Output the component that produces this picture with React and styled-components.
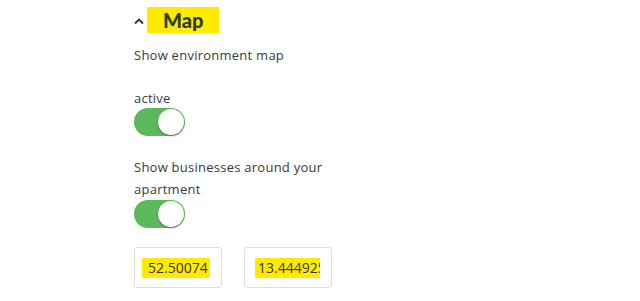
import React from "react";
import styled, { createGlobalStyle } from "styled-components";

const Global = createGlobalStyle`
  html, body { margin: 0; padding: 0; background: #fff; }
  body { font-family: "Open Sans", "Lato", sans-serif; color: #3a3a3a; }
`;

const Panel = styled.div`
  width: 220px;
  padding: 7px 0 0 134px;
  display: flex;
  flex-direction: column;
`;

const Header = styled.div`
  display: flex;
  align-items: center;
  height: 26px;
`;

const Chevron = styled.svg`
  width: 10px;
  height: 8px;
  margin-right: 3px;
  margin-top: 2px;
`;

const Title = styled.h2`
  margin: 0;
  font-family: "Lato", sans-serif;
  font-size: 20px;
  font-weight: 900;
  color: #2f3a1a;
  background: #ffea00;
  height: 26px;
  line-height: 26px;
  padding: 0 17px 0 16px;
  box-sizing: border-box;
  width: 72px;
`;

const Label = styled.div`
  font-size: 13px;
  line-height: 22px;
  letter-spacing: 0.25px;
  margin-top: ${(p) => p.$mt || 0}px;
`;

const Switch = styled.div`
  width: 51px;
  height: 28px;
  border-radius: 14px;
  background: #5cb85c;
  position: relative;
  margin-top: ${(p) => p.$mt || 0}px;
`;

const Knob = styled.div`
  position: absolute;
  right: 1px;
  top: 1px;
  width: 26px;
  height: 26px;
  border-radius: 50%;
  background: #fff;
  box-shadow: 0 1px 2px rgba(0, 0, 0, 0.35);
`;

const Inputs = styled.div`
  display: flex;
  gap: 22px;
  margin-top: ${(p) => p.$mt}px;
`;

const InputBox = styled.div`
  width: 88px;
  height: 41px;
  box-sizing: border-box;
  border: 1px solid #dcdcdc;
  border-radius: 3px;
  display: flex;
  align-items: center;
  padding: 0 ${(p) => p.$pr}px 0 ${(p) => p.$pl}px;
  overflow: hidden;
`;

const Mark = styled.div`
  background: #ffea00;
  height: 20px;
  flex: 1;
  overflow: hidden;
  white-space: nowrap;
  font-size: 14px;
  line-height: 20px;
  color: #333;
  padding-left: ${(p) => p.$ti}px;
`;

export default function App() {
  return (
    <>
      <Global />
      <Panel>
        <Header>
          <Chevron viewBox="0 0 10 8">
            <path d="M1 6.5 L5 2.5 L9 6.5" fill="none" stroke="#333" strokeWidth="1.8" />
          </Chevron>
          <Title>Map</Title>
        </Header>
        <Label $mt={11}>Show environment map</Label>
        <Label $mt={21}>active</Label>
        <Switch $mt={-1}>
          <Knob />
        </Switch>
        <Label $mt={20}>Show businesses around your apartment</Label>
        <Switch $mt={0}>
          <Knob />
        </Switch>
        <Inputs $mt={19}>
          <InputBox $pl={7} $pr={11}>
            <Mark $ti={6}>52.50074</Mark>
          </InputBox>
          <InputBox $pl={10} $pr={11}>
            <Mark $ti={3}>13.444925</Mark>
          </InputBox>
        </Inputs>
      </Panel>
    </>
  );
}
